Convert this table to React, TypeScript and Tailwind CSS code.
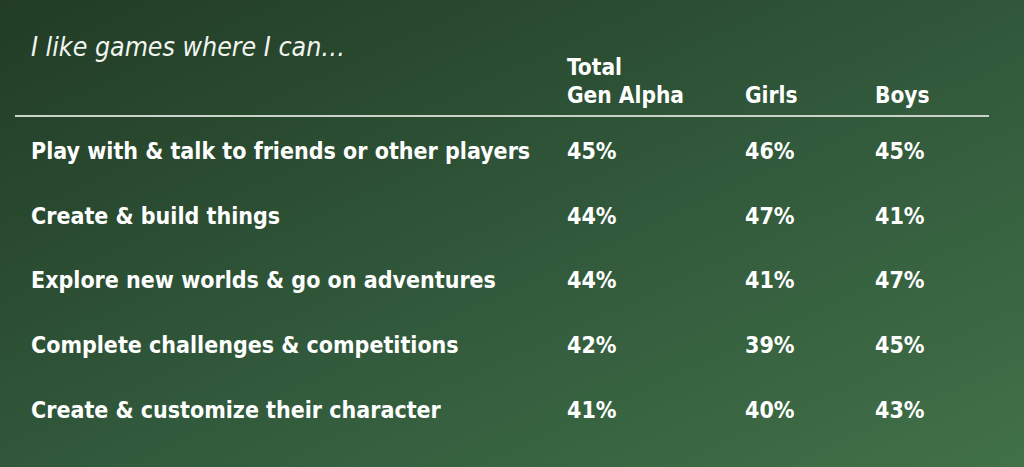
import React from 'react';

const rows = [
  { label: 'Play with & talk to friends or other players', total: '45%', girls: '46%', boys: '45%' },
  { label: 'Create & build things', total: '44%', girls: '47%', boys: '41%' },
  { label: 'Explore new worlds & go on adventures', total: '44%', girls: '41%', boys: '47%' },
  { label: 'Complete challenges & competitions', total: '42%', girls: '39%', boys: '45%' },
  { label: 'Create & customize their character', total: '41%', girls: '40%', boys: '43%' },
];

const cols = 'grid grid-cols-[536px_178px_130px_1fr]';

export default function App() {
  return (
    <div className="w-[1024px] h-[467px] overflow-hidden bg-linear-to-br from-[#223c25] via-[#30573a] to-[#417148] text-white font-['DejaVu_Sans_Condensed','DejaVu_Sans',sans-serif]">
      {/* Header */}
      <div className={`${cols} pl-[31px] pt-[31px] h-[115px]`}>
        <div className="italic text-[26.5px] leading-[32px] text-[#f2f5f0]">I like games where I can…</div>
        <div className="font-bold text-[22.5px] leading-[28px] pt-[22px]">
          Total
          <br />
          Gen Alpha
        </div>
        <div className="font-bold text-[22.5px] leading-[28px] pt-[50px]">Girls</div>
        <div className="font-bold text-[22.5px] leading-[28px] pt-[50px]">Boys</div>
      </div>

      <div className="ml-[15px] w-[974px] h-[2px] bg-[#c9d3c8]" />

      {/* Rows */}
      <div className="pt-[19px]">
        {rows.map((r) => (
          <div key={r.label} className={`${cols} pl-[31px] h-[64.7px] font-bold text-[23px] leading-[30px]`}>
            <div>{r.label}</div>
            <div>{r.total}</div>
            <div>{r.girls}</div>
            <div>{r.boys}</div>
          </div>
        ))}
      </div>
    </div>
  );
}
